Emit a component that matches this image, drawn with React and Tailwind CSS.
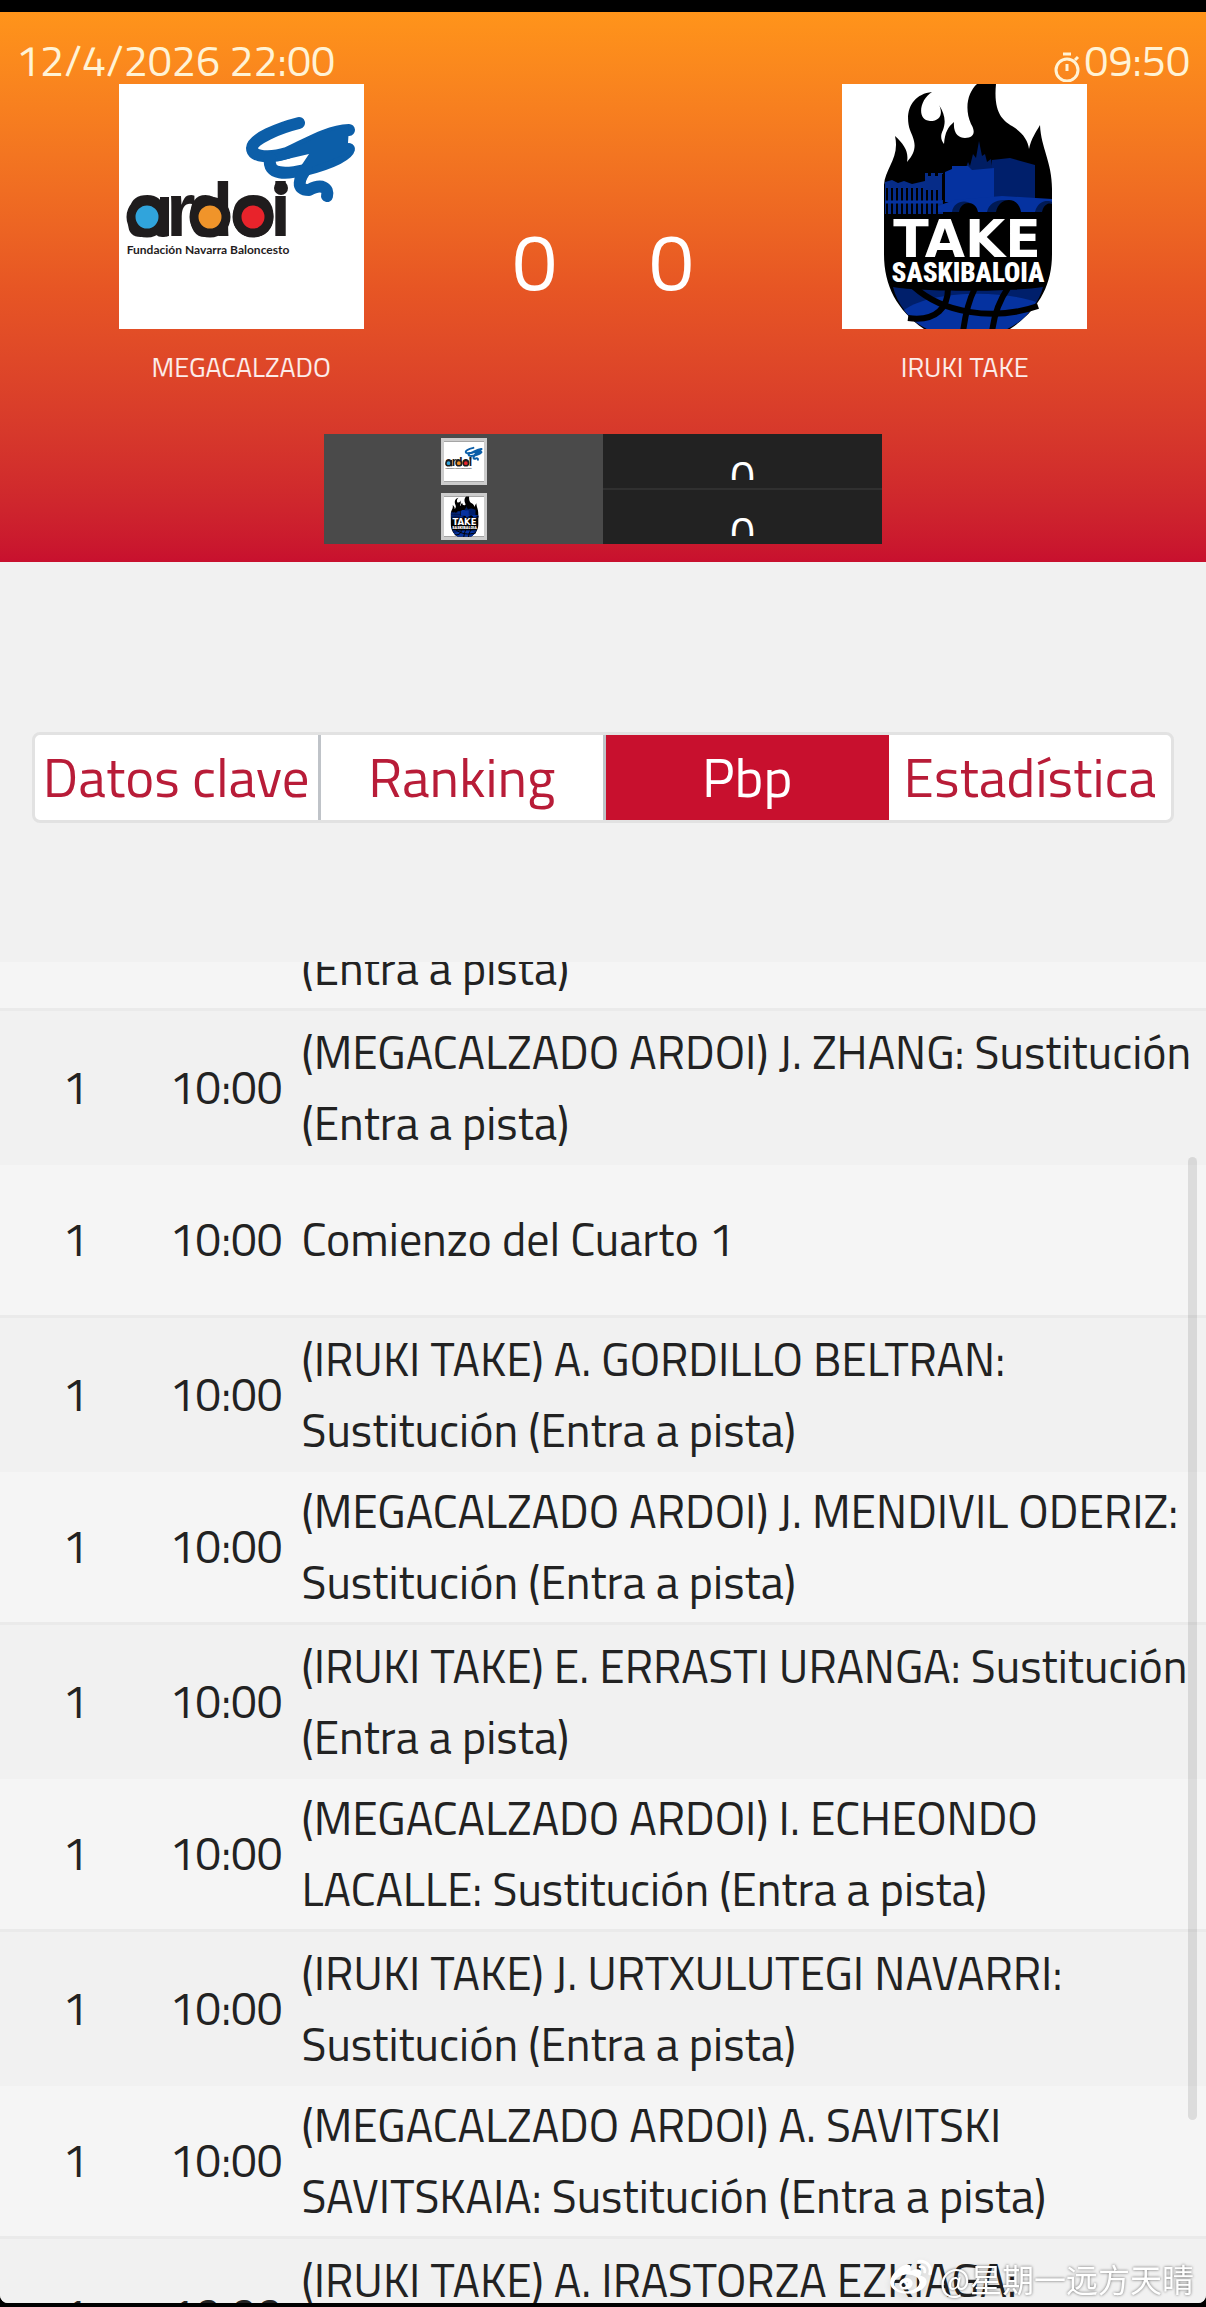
import { useEffect, useRef, useState } from "react";
import { FaWeibo } from "react-icons/fa";

const ArdoiLogo = ({ className }) => (
  <svg viewBox="0 0 245 245" className={className} role="img" aria-label="Ardoi">
    <rect width="245" height="245" fill="#fff" />
    <g fill="none" stroke="#0c5ea8" strokeWidth="12" strokeLinecap="round" strokeLinejoin="round">
      <path d="M180 39C160 44 133 55 133 64C133 74 152 74 168 69C188 60 208 47 230 46" />
      <path d="M151 74C148 92 168 90 186 86C205 81 228 73 230 65" />
      <path d="M188 84C180 94 176 106 190 106C203 99 210 104 208 112" />
    </g>
    <path d="M172 66L205 49L230 42L229 59L233 68L196 82L178 88L190 70L160 77L156 70Z" fill="#0c5ea8" />
    <g fontFamily="Liberation Sans, sans-serif" fontWeight="700" fill="#1f1c1d">
      <text x="7 47 68 111 151" y="152" fontSize="76">
        ardoi
      </text>
    </g>
    <g stroke="#1f1c1d" strokeWidth="9">
      <circle cx="28" cy="133" r="16" fill="#30a4dc" />
      <circle cx="91" cy="133" r="16" fill="#f0942a" />
      <circle cx="134" cy="133" r="16" fill="#e8232b" />
    </g>
    <rect x="41" y="113" width="9" height="39" fill="#1f1c1d" />
    <circle cx="162" cy="104" r="7" fill="#1f1c1d" />
    <text x="89" y="170" textAnchor="middle" fontSize="12" fontWeight="700" fontFamily="Lato, sans-serif" fill="#1f1c1d">
      Fundación Navarra Baloncesto
    </text>
  </svg>
);

const TakeLogo = ({ className }) => (
  <svg viewBox="0 0 245 245" className={className} role="img" aria-label="Take Saskibaloia">
    <rect width="245" height="245" fill="#fff" />
    <path
      d="M42 101C43 84 58 74 53 52C62 60 67 68 65 78C78 64 71 54 68 46C62 28 70 10 90 8C78 15 74 36 88 37C99 37 101 29 97 21C103 30 104 38 101 46C98 52 99 56 102 60C103 48 106 43 112 38C111 50 117 54 123 54C132 54 134 48 129 40C122 24 126 8 135 0H154C151 30 162 37 170 42C180 48 186 56 187 65C189 55 194 48 198 41C199 64 210 78 210 105V170C210 202 196 226 168 245H82C55 226 42 202 42 170Z"
      fill="#000"
    />
    {/* ciudad */}
    <path d="M123 86L126 78L128 82L131 70L134 74L137 57L140 72L143 70L145 78L149 75L151 88V115H123Z" fill="#001d63" />
    <path d="M150 76L168 74L193 81V116H150Z" fill="#001f6b" />
    <path d="M103 88L110 85V82H126L130 86L152 84V118H103Z" fill="#0532a0" />
    <path d="M43 98L50 96L56 99L62 97L70 100L83 97V89H86V92H89V89H93V92H96V89H101V130H43Z" fill="#062c88" />
    <path d="M45 104V131M50 104V131M55 104V131M60 104V131M65 104V131M70 104V131M75 104V131M80 104V131M85 106V131M90 106V131M95 106V131M101 90V116" stroke="#000" strokeWidth="2" />
    <path d="M43 118H100" stroke="#0532a0" strokeWidth="3" />
    <path d="M96 128V122L112 116L160 112L210 115V128Z" fill="#0532a0" />
    <path d="M110 128C112 114 132 114 134 128ZM145 128C148 112 175 112 178 128ZM193 128C196 116 206 116 210 118V128Z" fill="#001a55" />
    <path d="M117 128C119 116 134 116 136 128ZM154 128C157 112 177 112 179 128ZM200 128C202 119 208 119 210 120V128Z" fill="#000" />
    {/* balon */}
    <path d="M51 203C80 208 170 208 201 203C197 220 182 236 165 245H85C68 236 55 220 51 203Z" fill="#001f6b" />
    <path d="M62 226C90 206 160 206 194 218C186 232 176 240 165 245H85C75 240 68 234 62 226Z" fill="#0532a0" />
    <g fill="none" stroke="#000" strokeWidth="6">
      <path d="M72 203C100 228 150 238 196 222" />
      <path d="M106 204C106 222 96 238 66 234" />
      <path d="M133 204C126 218 123 232 121 248" />
      <path d="M166 204C156 218 152 232 150 248" />
    </g>
    <g fontWeight="900" fill="#fff" textAnchor="middle">
      <text x="125" y="173" fontSize="52" fontFamily="DejaVu Sans, sans-serif">
        TAKE
      </text>
      <text x="126" y="198" fontSize="27" fontFamily="Roboto Condensed, Roboto, sans-serif">
        SASKIBALOIA
      </text>
    </g>
  </svg>
);

const StopwatchIcon = () => (
  <svg viewBox="0 0 26 30" className="w-[26px] h-[30px]" fill="none" stroke="currentColor" strokeWidth="3" aria-hidden="true">
    <circle cx="13" cy="18" r="11" />
    <path d="M9 2H17M13 12V19M21 8L24 5" />
  </svg>
);

const equipos = [
  { nombre: "MEGACALZADO", Logo: ArdoiLogo, cuarto: 0 },
  { nombre: "IRUKI TAKE", Logo: TakeLogo, cuarto: 0 },
];

const pestanas = ["Datos clave", "Ranking", "Pbp", "Estadística"];

const jugadas = [
  { id: 1, lineas: ["(IRUKI TAKE) Sustitución", "(Entra a pista)"] },
  { id: 2, lineas: ["(MEGACALZADO ARDOI) J. ZHANG: Sustitución", "(Entra a pista)"] },
  { id: 3, lineas: ["Comienzo del Cuarto 1"] },
  { id: 4, lineas: ["(IRUKI TAKE) A. GORDILLO BELTRAN:", "Sustitución (Entra a pista)"] },
  { id: 5, lineas: ["(MEGACALZADO ARDOI) J. MENDIVIL ODERIZ:", "Sustitución (Entra a pista)"] },
  { id: 6, lineas: ["(IRUKI TAKE) E. ERRASTI URANGA: Sustitución", "(Entra a pista)"] },
  { id: 7, lineas: ["(MEGACALZADO ARDOI) I. ECHEONDO", "LACALLE: Sustitución (Entra a pista)"] },
  { id: 8, lineas: ["(IRUKI TAKE) J. URTXULUTEGI NAVARRI:", "Sustitución (Entra a pista)"] },
  { id: 9, lineas: ["(MEGACALZADO ARDOI) A. SAVITSKI", "SAVITSKAIA: Sustitución (Entra a pista)"] },
  { id: 10, lineas: ["(IRUKI TAKE) A. IRASTORZA EZKIAGA:", "Sustitución (Entra a pista)"] },
];

const Equipo = ({ equipo }) => (
  <div className="flex flex-col items-center">
    <equipo.Logo className="w-[245px] h-[245px]" />
    <h2 className="mt-6 text-[27px] leading-[28px] text-white/90">{equipo.nombre}</h2>
  </div>
);

const Marcador = () => (
  <header className="bg-linear-to-b from-[#ff941a] via-[#e75624] to-[#c8102e] border-t-[12px] border-black text-white pb-[18px]">
    <div className="flex justify-between px-4 pt-[26px] pb-[2px] text-[43px] leading-[44px] text-[#fff3d6]">
      <time>12/4/2026 22:00</time>
      <div className="flex items-end gap-1">
        <StopwatchIcon />
        <span>09:50</span>
      </div>
    </div>
    <div className="grid grid-cols-[2fr_1fr_2fr]">
      <Equipo equipo={equipos[0]} />
      <div className="flex justify-center gap-[92px] pt-[136px] text-[80px] leading-[80px]">
        <span>0</span>
        <span>0</span>
      </div>
      <Equipo equipo={equipos[1]} />
    </div>
    <table className="mt-[53px] mx-auto w-[558px] max-w-full table-fixed">
      <tbody>
        {equipos.map((equipo) => (
          <tr key={equipo.nombre} className="group h-[55px]">
            <th className="p-0 bg-[#4a4a4a]">
              <equipo.Logo className="mx-auto w-[46px] h-[47px] border-[3px] border-[#cccccc]" />
            </th>
            <td className="p-0 bg-[#222222] text-center align-top group-even:border-t-2 border-[#303030]">
              <div className="mt-[18px] h-7 overflow-hidden text-[44px] leading-[50px]">{equipo.cuarto}</div>
            </td>
          </tr>
        ))}
      </tbody>
    </table>
  </header>
);

const TablaJugadas = () => {
  const scroller = useRef(null);

  // se abre con la lista ya desplazada
  useEffect(() => {
    scroller.current.scrollTop = 104;
  }, []);

  return (
    <div className="relative mt-[139px] flex-1 min-h-0">
      <div ref={scroller} className="h-full overflow-y-auto [scrollbar-width:none]">
        <table className="w-full table-fixed text-[46px] leading-[71px] text-[#222222]">
          <colgroup>
            <col className="w-1/8" />
            <col className="w-1/8" />
            <col />
          </colgroup>
          <tbody>
            {jugadas.map((jugada) => (
              <tr
                key={jugada.id}
                className="h-[151px] bg-[#f5f5f5] even:h-[156px] even:bg-[#f1f1f1] even:border-t-[3px] even:border-[#eaeaea]"
              >
                <td className="p-0 text-center">1</td>
                <td className="p-0 text-center">10:00</td>
                <td className="p-0 whitespace-nowrap">
                  {jugada.lineas.map((linea) => (
                    <p key={linea}>{linea}</p>
                  ))}
                </td>
              </tr>
            ))}
          </tbody>
        </table>
      </div>
      <div className="absolute top-[195px] bottom-[183px] right-[9px] w-[9px] rounded-full bg-black/10"></div>
    </div>
  );
};

export default function App() {
  const [activa, setActiva] = useState("Pbp");

  return (
    <div className="h-screen bg-black pb-1 font-['Titillium_Web',Roboto,sans-serif]">
      <main className="relative flex h-full flex-col overflow-hidden rounded-b-lg bg-[#f1f1f1]">
        <Marcador />
        <nav className="mx-8 mt-[170px] flex h-[91px] shrink-0 overflow-hidden rounded-lg border-[3px] border-[#e2e2e2] bg-white">
          {pestanas.map((pestana) => (
            <button
              key={pestana}
              onClick={() => setActiva(pestana)}
              className={
                activa === pestana
                  ? "flex-1 basis-0 bg-[#c8102e] text-[55px] text-white whitespace-nowrap"
                  : "flex-1 basis-0 text-[55px] text-[#b81c38] whitespace-nowrap border-r-[3px] border-[#bfc3c8] last:border-r-0"
              }
            >
              {pestana}
            </button>
          ))}
        </nav>
        <TablaJugadas />
        <div className="absolute bottom-1 right-3 flex items-center gap-2 font-['Noto_Sans_CJK_SC',sans-serif] text-[32px] leading-[40px] text-white [text-shadow:0_0_3px_rgba(0,0,0,0.6)]">
          <FaWeibo className="size-[42px] drop-shadow-md" />
          <span>@星期一远方天晴</span>
        </div>
      </main>
    </div>
  );
}
